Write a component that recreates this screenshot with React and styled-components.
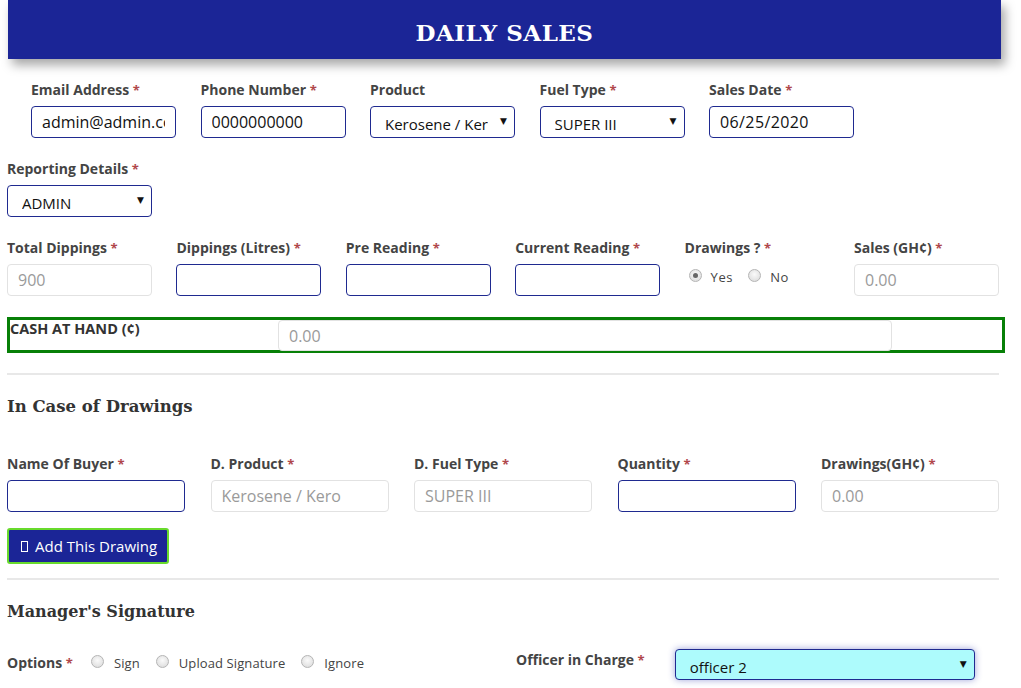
import React from 'react';
import styled, { createGlobalStyle } from 'styled-components';

const GlobalStyle = createGlobalStyle`
  body {
    margin: 0;
    background: #fff;
    font-family: "Open Sans", "DejaVu Sans", sans-serif;
    color: #444;
  }
  * { box-sizing: border-box; }
`;

const Page = styled.div`
  width: 1021px;
  height: 688px;
  overflow: hidden;
`;

const Header = styled.div`
  margin: 0 20px 0 8px;
  height: 59px;
  background: #1b2596;
  box-shadow: 4px 6px 10px rgba(0, 0, 0, 0.35);
  display: flex;
  align-items: center;
  justify-content: center;
  padding-top: 6px;

  h1 {
    margin: 0;
    color: #fff;
    font-family: "DejaVu Serif", "Liberation Serif", serif;
    font-weight: 700;
    font-size: 23px;
    letter-spacing: 0.5px;
  }
`;

const Form = styled.div`
  padding: 0 22px 0 7px;
`;

const TopRow = styled.div`
  display: flex;
  gap: 24.5px;
  margin: 22px 0 0 24px;
`;

const Grid = styled.div`
  display: grid;
  grid-template-columns: repeat(${p => p.cols}, 1fr);
  column-gap: ${p => p.gap}px;
  margin-top: ${p => p.top}px;
`;

const Field = styled.div`
  width: ${p => (p.w ? `${p.w}px` : 'auto')};
  margin-top: ${p => p.top || 0}px;
  display: flex;
  flex-direction: column;
`;

const Label = styled.label`
  font-size: 14px;
  font-weight: 700;
  color: #444;
  line-height: 18px;
  margin-bottom: 7px;
  white-space: nowrap;
`;

const Star = styled.span`
  color: #b0474b;
  font-size: 13px;
`;

const Input = styled.input`
  height: 32px;
  width: 100%;
  border: 1px solid ${p => (p.disabled ? '#e2e2e2' : '#1f2a90')};
  border-radius: 4px;
  background: #fff;
  padding: 0 10px;
  font-family: "Open Sans", "DejaVu Sans", sans-serif;
  font-size: 16px;
  color: ${p => (p.disabled ? '#9a9a9a' : '#111')};
  letter-spacing: ${p => (p.spaced ? '0.4px' : '0')};
  outline: none;
  &::placeholder { color: #9a9a9a; }
`;

const SelectWrap = styled.div`
  position: relative;
  width: ${p => (p.w ? `${p.w}px` : '100%')};
`;

const Select = styled.select`
  appearance: none;
  -webkit-appearance: none;
  width: 100%;
  height: ${p => (p.h ? p.h : 32)}px;
  border: 1px solid #1f2a90;
  border-radius: 4px;
  background: ${p => p.bg || '#fff'};
  box-shadow: ${p => (p.glow ? '0 0 7px rgba(40, 50, 170, 0.45)' : 'none')};
  padding: 4px 26px 0 14px;
  font-family: "Open Sans", "DejaVu Sans", sans-serif;
  font-size: 15px;
  color: #111;
  outline: none;
`;

const Caret = styled.span`
  position: absolute;
  right: 8px;
  top: 50%;
  transform: translateY(-60%);
  font-size: 9px;
  color: #111;
  pointer-events: none;
`;

const RadioGroup = styled.div`
  display: flex;
  align-items: center;
  height: 32px;
  padding: 0 0 6px 4px;
`;

const RadioItem = styled.span`
  display: inline-flex;
  align-items: center;
  font-size: 13px;
  letter-spacing: ${p => (p.ls !== undefined ? p.ls : 0.6)}px;
  color: #444;
  margin-right: ${p => p.mr || 15}px;
`;

const Dot = styled.span`
  width: 13px;
  height: 13px;
  border-radius: 50%;
  border: 1px solid #b5b5b5;
  background: radial-gradient(circle at 50% 40%, #fafafa 0%, #d8d8d8 100%);
  margin-right: ${p => p.gap || 9}px;
  margin-top: -4px;
  display: inline-flex;
  align-items: center;
  justify-content: center;

  &::after {
    content: '';
    width: 5px;
    height: 5px;
    border-radius: 50%;
    background: ${p => (p.checked ? '#666' : 'transparent')};
  }
`;

const CashBox = styled.div`
  margin-top: 21px;
  width: 998px;
  height: 36px;
  border: 3px solid #078007;
  display: flex;
  align-items: flex-start;
`;

const CashLabel = styled.div`
  width: 268px;
  line-height: 18px;
  font-size: 14.5px;
  font-weight: 700;
  color: #333;
`;

const CashInput = styled(Input)`
  width: 614px;
  height: 31px;
`;

const Rule = styled.hr`
  margin: ${p => p.top}px 0 0 0;
  border: none;
  border-top: 2px solid #e8e8e8;
  width: 992px;
`;

const SectionTitle = styled.h3`
  margin: ${p => p.top}px 0 0 0;
  font-family: "DejaVu Serif", "Liberation Serif", serif;
  font-weight: 700;
  font-size: ${p => p.size || 16}px;
  color: #333;
  line-height: 20px;
`;

const AddButton = styled.button`
  margin-top: 16px;
  height: 36px;
  padding: 0 10px 0 12px;
  background: #1b2596;
  border: 2px solid #68da2c;
  border-radius: 3px;
  color: #fff;
  font-family: "Open Sans", "DejaVu Sans", sans-serif;
  font-size: 15px;
  display: inline-flex;
  align-items: center;
  gap: 7px;
`;

const Tofu = styled.span`
  width: 7px;
  height: 11px;
  border: 1px solid #fff;
  display: inline-block;
`;

const BottomRow = styled.div`
  display: flex;
  align-items: center;
  margin-top: 27px;
`;

const OptionsSide = styled.div`
  width: 509px;
  display: flex;
  align-items: center;
  padding-bottom: 3px;
`;

const OptionsLabel = styled(Label)`
  margin: 0 18px 0 0;
`;

const OfficerSide = styled.div`
  display: flex;
  align-items: center;
`;

const OfficerLabel = styled(Label)`
  margin: 0 30px 0 0;
  padding-bottom: 10px;
`;

const req = <Star>*</Star>;

export default function App() {
  return (
    <Page>
      <GlobalStyle />
      <Header>
        <h1>DAILY SALES</h1>
      </Header>
      <Form>
        <TopRow>
          <Field w={145}>
            <Label>Email Address {req}</Label>
            <Input defaultValue="admin@admin.com" />
          </Field>
          <Field w={145}>
            <Label>Phone Number {req}</Label>
            <Input defaultValue="0000000000" />
          </Field>
          <Field w={145}>
            <Label>Product</Label>
            <SelectWrap>
              <Select defaultValue="k">
                <option value="k">Kerosene  /  Kero</option>
              </Select>
              <Caret>▼</Caret>
            </SelectWrap>
          </Field>
          <Field w={145}>
            <Label>Fuel Type {req}</Label>
            <SelectWrap>
              <Select defaultValue="s">
                <option value="s">SUPER III</option>
              </Select>
              <Caret>▼</Caret>
            </SelectWrap>
          </Field>
          <Field w={145}>
            <Label>Sales Date {req}</Label>
            <Input defaultValue="06/25/2020" spaced />
          </Field>
        </TopRow>

        <Field w={145} top={22}>
          <Label>Reporting Details {req}</Label>
          <SelectWrap>
            <Select defaultValue="a">
              <option value="a">ADMIN</option>
            </Select>
            <Caret>▼</Caret>
          </SelectWrap>
        </Field>

        <Grid cols={6} gap={24.4} top={22}>
          <Field>
            <Label>Total Dippings {req}</Label>
            <Input disabled defaultValue="900" />
          </Field>
          <Field>
            <Label>Dippings (Litres) {req}</Label>
            <Input />
          </Field>
          <Field>
            <Label>Pre Reading {req}</Label>
            <Input />
          </Field>
          <Field>
            <Label>Current Reading {req}</Label>
            <Input />
          </Field>
          <Field>
            <Label>Drawings ? {req}</Label>
            <RadioGroup>
              <RadioItem>
                <Dot checked />
                Yes
              </RadioItem>
              <RadioItem>
                <Dot />
                No
              </RadioItem>
            </RadioGroup>
          </Field>
          <Field>
            <Label>Sales (GH¢) {req}</Label>
            <Input disabled placeholder="0.00" />
          </Field>
        </Grid>

        <CashBox>
          <CashLabel>CASH AT HAND (¢)</CashLabel>
          <CashInput disabled placeholder="0.00" />
        </CashBox>

        <Rule top={20} />
        <SectionTitle top={22} size={16.5}>In Case of Drawings</SectionTitle>

        <Grid cols={5} gap={25.5} top={38}>
          <Field>
            <Label>Name Of Buyer {req}</Label>
            <Input />
          </Field>
          <Field>
            <Label>D. Product {req}</Label>
            <Input disabled defaultValue="Kerosene / Kero" />
          </Field>
          <Field>
            <Label>D. Fuel Type {req}</Label>
            <Input disabled defaultValue="SUPER III" />
          </Field>
          <Field>
            <Label>Quantity {req}</Label>
            <Input />
          </Field>
          <Field>
            <Label>Drawings(GH¢) {req}</Label>
            <Input disabled placeholder="0.00" />
          </Field>
        </Grid>

        <AddButton>
          <Tofu />
          Add This Drawing
        </AddButton>

        <Rule top={14} />
        <SectionTitle top={22}>Manager's Signature</SectionTitle>

        <BottomRow>
          <OptionsSide>
            <OptionsLabel>Options {req}</OptionsLabel>
            <RadioItem mr={16} ls={0.1}>
              <Dot gap={10} />
              Sign
            </RadioItem>
            <RadioItem mr={16} ls={0.1}>
              <Dot gap={10} />
              Upload Signature
            </RadioItem>
            <RadioItem ls={0.1}>
              <Dot gap={10} />
              Ignore
            </RadioItem>
          </OptionsSide>
          <OfficerSide>
            <OfficerLabel>Officer in Charge {req}</OfficerLabel>
            <SelectWrap w={300}>
              <Select defaultValue="o2" bg="#adfbfc" glow h={31}>
                <option value="o2">officer 2</option>
              </Select>
              <Caret>▼</Caret>
            </SelectWrap>
          </OfficerSide>
        </BottomRow>
      </Form>
    </Page>
  );
}
